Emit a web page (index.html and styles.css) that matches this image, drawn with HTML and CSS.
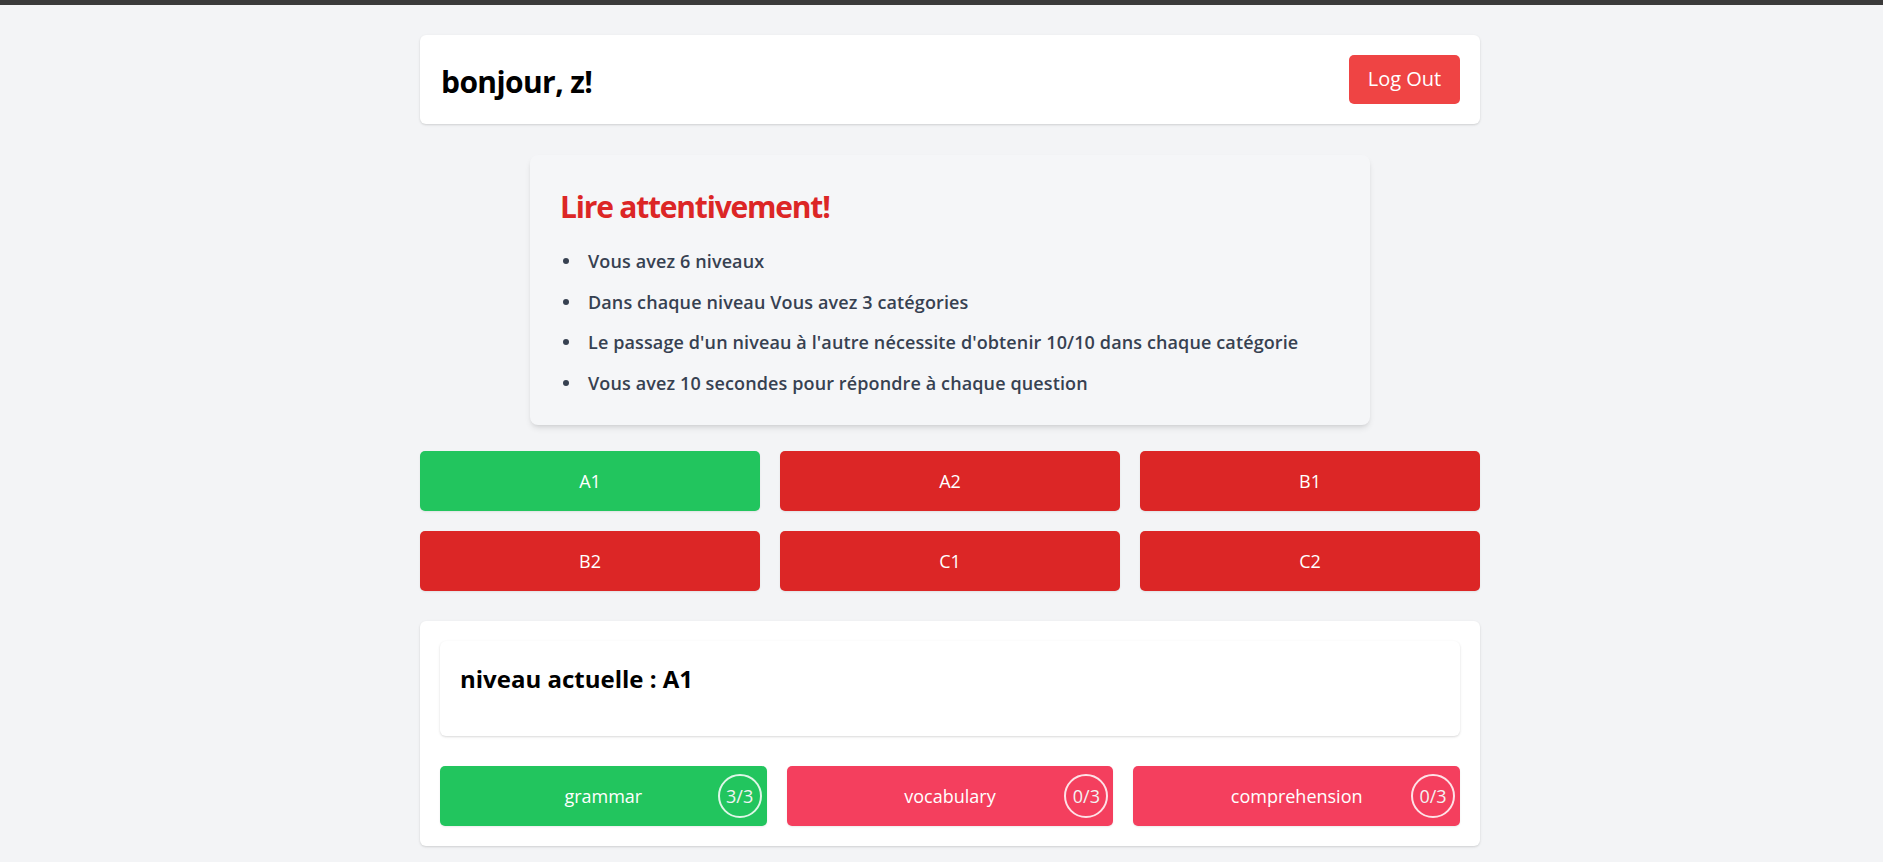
FILE: index.html
```html
<!DOCTYPE html>
<html lang="fr">
<head>
<meta charset="utf-8">
<title>Niveaux</title>
<link rel="stylesheet" href="styles.css">
</head>
<body>
<div class="topbar"></div>
<main class="container">
  <header class="card header">
    <h1 class="greeting">bonjour, z!</h1>
    <button class="logout">Log Out</button>
  </header>

  <section class="notice">
    <h2 class="notice-title">Lire attentivement!</h2>
    <ul class="notice-list">
      <li>Vous avez 6 niveaux</li>
      <li>Dans chaque niveau Vous avez 3 catégories</li>
      <li>Le passage d'un niveau à l'autre nécessite d'obtenir 10/10 dans chaque catégorie</li>
      <li>Vous avez 10 secondes pour répondre à chaque question</li>
    </ul>
  </section>

  <div class="levels">
    <button class="level done">A1</button>
    <button class="level locked">A2</button>
    <button class="level locked">B1</button>
    <button class="level locked">B2</button>
    <button class="level locked">C1</button>
    <button class="level locked">C2</button>
  </div>

  <section class="card progress">
    <div class="current">
      <h3 class="current-title">niveau actuelle : A1</h3>
    </div>
    <div class="cats">
      <button class="cat done">grammar<span class="badge">3/3</span></button>
      <button class="cat todo">vocabulary<span class="badge">0/3</span></button>
      <button class="cat todo">comprehension<span class="badge">0/3</span></button>
    </div>
  </section>
</main>
</body>
</html>
```

FILE: styles.css
```css
* { box-sizing: border-box; }

html, body {
  margin: 0;
  padding: 0;
}

body {
  background: #f3f4f6;
  font-family: "Segoe UI", "Open Sans", "Noto Sans", sans-serif;
  color: #111;
  min-height: 862px;
}

.topbar {
  height: 5px;
  background: #3a3a3a;
}

.container {
  width: 1060px;
  margin-left: 420px;
  padding-top: 30px;
}

.card {
  background: #fff;
  border-radius: 6px;
  box-shadow: 0 1px 3px rgba(0,0,0,0.1), 0 1px 2px rgba(0,0,0,0.06);
}

.header {
  display: flex;
  align-items: center;
  justify-content: space-between;
  padding: 20px;
}

.greeting {
  margin: 0;
  padding: 4px 0 0 1px;
  font-size: 30px;
  line-height: 36px;
  font-weight: 700;
  letter-spacing: -0.6px;
  color: #000;
}

.logout {
  font-family: inherit;
  font-size: 20px;
  line-height: 28px;
  color: #fff;
  background: #ef4444;
  border: 0;
  border-radius: 5px;
  padding: 10px 18px 11px;
  width: 111px;
}

.notice {
  width: 840px;
  margin: 31px auto 0;
  background: #f5f6f8;
  border-radius: 8px;
  box-shadow: 0 4px 6px -1px rgba(0,0,0,0.1), 0 2px 4px -2px rgba(0,0,0,0.1);
  padding: 32px 30px 28px;
}

.notice-title {
  margin: 2px 0 22px;
  font-size: 30px;
  line-height: 36px;
  font-weight: 700;
  letter-spacing: -1.2px;
  color: #dc2626;
}

.notice-list {
  list-style: none;
  margin: 0;
  padding: 0 0 0 3px;
  display: flex;
  flex-direction: column;
  gap: 12.5px;
}

.notice-list li {
  display: flex;
  align-items: center;
  gap: 19px;
  font-size: 18px;
  line-height: 28px;
  font-weight: 600;
  letter-spacing: 0.12px;
  color: #374151;
}

.notice-list li::before {
  content: "";
  flex: none;
  width: 6px;
  height: 6px;
  border-radius: 50%;
  background: #374151;
}

.levels {
  margin-top: 26px;
  display: grid;
  grid-template-columns: repeat(3, 1fr);
  gap: 20px;
}

.level {
  height: 60px;
  border: 0;
  border-radius: 5px;
  font-family: inherit;
  font-size: 18px;
  color: #fff;
  box-shadow: 0 1px 2px rgba(0,0,0,0.08);
}

.level.done { background: #22c55e; }
.level.locked { background: #dc2626; }

.progress {
  margin-top: 30px;
  padding: 20px;
}

.current {
  background: #fff;
  border-radius: 6px;
  box-shadow: 0 1px 3px rgba(0,0,0,0.1), 0 1px 2px rgba(0,0,0,0.06);
  padding: 22px 20px 41px;
}

.current-title {
  margin: 0;
  font-size: 24px;
  line-height: 32px;
  font-weight: 700;
  color: #000;
}

.cats {
  margin-top: 30px;
  display: grid;
  grid-template-columns: repeat(3, 1fr);
  gap: 20px;
}

.cat {
  position: relative;
  height: 60px;
  border: 0;
  border-radius: 5px;
  font-family: inherit;
  font-size: 18px;
  color: #fff;
  box-shadow: 0 1px 2px rgba(0,0,0,0.08);
}

.cat.done { background: #22c55e; }
.cat.todo { background: #f43f5e; }

.badge {
  position: absolute;
  right: 5px;
  top: 8px;
  width: 44px;
  height: 44px;
  border: 2px solid rgba(255,255,255,0.85);
  border-radius: 50%;
  display: flex;
  align-items: center;
  justify-content: center;
  font-size: 18px;
  color: #f3f3f3;
}
```
